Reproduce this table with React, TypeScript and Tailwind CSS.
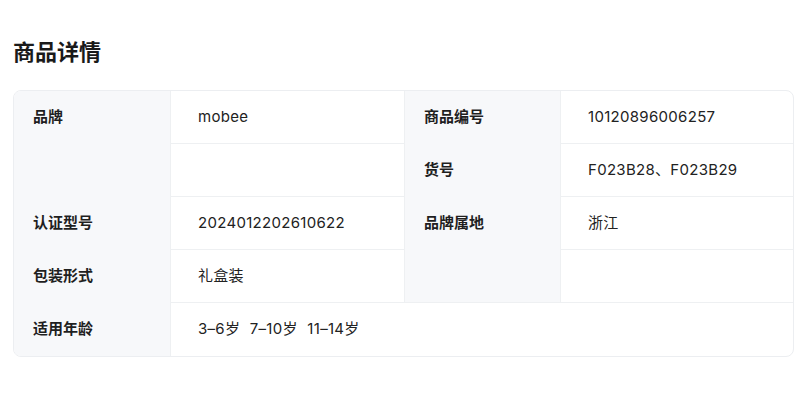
const font = { fontFamily: 'Inter, "Noto Sans CJK SC", sans-serif' };

function Label({ children, className = "" }: { children?: React.ReactNode; className?: string }) {
  return (
    <div className={`bg-[#f7f8fa] px-[19px] pt-[15px] text-[15px] leading-[22px] font-semibold text-[#1f1f1f] ${className}`}>
      {children}
    </div>
  );
}

function Value({ children, className = "" }: { children?: React.ReactNode; className?: string }) {
  return (
    <div className={`h-[53px] border-l border-[#eef0f2] px-[27px] pt-[15px] text-[15px] leading-[22px] tracking-[0.3px] text-[#222] ${className}`}>
      {children}
    </div>
  );
}

export default function App() {
  return (
    <div className="min-h-screen bg-white px-[13px] pt-[36px]" style={font}>
      <h2 className="text-[22px] leading-[32px] font-semibold text-[#1a1a1a]">商品详情</h2>
      <div className="mt-[22px] w-[781px] overflow-hidden rounded-[8px] border border-[#eceef1]">
        <div className="grid grid-cols-[156px_234px_156px_1fr]">
          <Label className="row-span-2">品牌</Label>
          <Value className="border-b">mobee</Value>
          <Label className="border-l border-[#eef0f2]">商品编号</Label>
          <Value className="border-b">10120896006257</Value>

          <Value className="border-b" />
          <Label className="border-l border-[#eef0f2]">货号</Label>
          <Value className="border-b">F023B28、F023B29</Value>

          <Label>认证型号</Label>
          <Value className="border-b">2024012202610622</Value>
          <Label className="row-span-2 border-l border-b border-[#eef0f2]">品牌属地</Label>
          <Value className="border-b">浙江</Value>

          <Label>包装形式</Label>
          <Value className="border-b">礼盒装</Value>
          <Value className="border-b" />

          <Label>适用年龄</Label>
          <Value className="col-span-3 h-[52px] [word-spacing:5px]">3–6岁 7–10岁 11–14岁</Value>
        </div>
      </div>
    </div>
  );
}
